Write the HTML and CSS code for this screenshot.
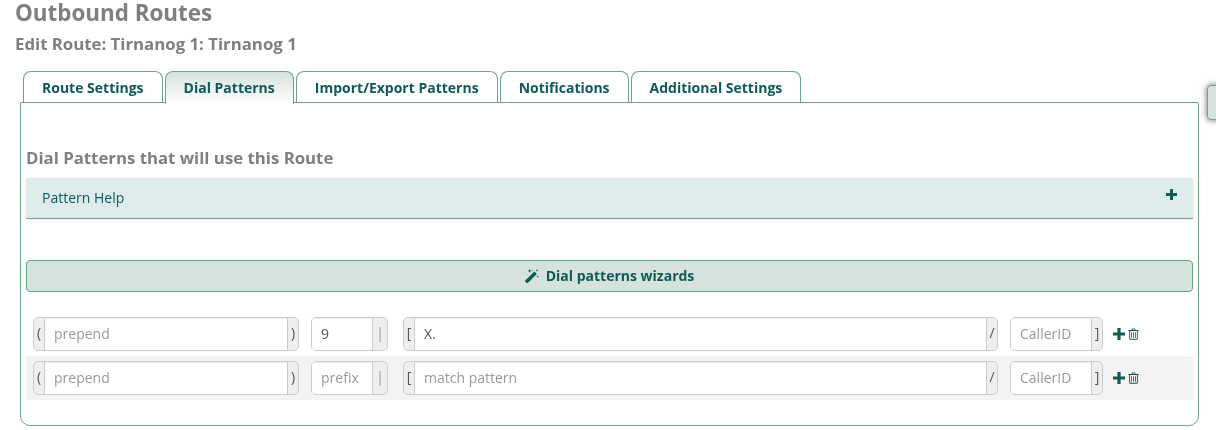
FILE: index.html
```html
<!DOCTYPE html>
<html lang="en">
<head>
    <meta charset="UTF-8">
    <meta name="viewport" content="width=device-width, initial-scale=1.0">
    <title>Outbound Routes</title>
    <link rel="stylesheet" href="styles.css">
</head>
<body>
    <h1>Outbound Routes</h1>
    <h2>Edit Route: Tirnanog 1: Tirnanog 1</h2>

    <button class="float-btn" aria-label="Actions"></button>

    <div class="tabs">
        <a class="tab">Route Settings</a>
        <a class="tab active">Dial Patterns</a>
        <a class="tab">Import/Export Patterns</a>
        <a class="tab">Notifications</a>
        <a class="tab">Additional Settings</a>
    </div>

    <div class="panel">
        <h3>Dial Patterns that will use this Route</h3>

        <div class="help-bar">
            <span class="label">Pattern Help</span>
            <svg class="icon-plus" viewBox="0 0 12 12"><path d="M4.4 0h3.2v4.4H12v3.2H7.6V12H4.4V7.6H0V4.4h4.4z"/></svg>
        </div>

        <button class="wizard-btn">
            <svg class="icon-wand" viewBox="0 0 14 14">
                <path d="M0.3 11.6 8.9 3a.8.8 0 0 1 1.1 0l1.4 1.4a.8.8 0 0 1 0 1.1L2.8 14a.8.8 0 0 1-1.1 0L.3 12.7a.8.8 0 0 1 0-1.1z"/>
                <path d="M4 1.2 5 0l.3 1.5 1.3.4-1.3.5L5 3.8 4.2 2.6 3 2.3zM12 0l.5 1 1 .4-1 .4-.5 1-.4-1-1-.4 1-.4zM12.6 6.5l.4.8.9.3-.9.4-.4.8-.3-.8-.9-.4.9-.3zM7.4.4l.3.6.6.2-.6.3-.3.6-.2-.6-.6-.3.6-.2z"/>
            </svg>
            <span class="label">Dial patterns wizards</span>
        </button>

        <div class="pattern-row">
            <div class="group"><span class="addon">(</span><input type="text" placeholder="prepend"><span class="addon">)</span></div>
            <div class="group"><input type="text" placeholder="prefix" value="9"><span class="addon pipe">|</span></div>
            <div class="group"><span class="addon">[</span><input type="text" placeholder="match pattern" value="X."><span class="addon">/</span></div>
            <div class="group"><input type="text" placeholder="CallerID"><span class="addon">]</span></div>
            <div class="row-actions">
                <svg class="icon-plus" viewBox="0 0 12 12"><path d="M4.4 0h3.2v4.4H12v3.2H7.6V12H4.4V7.6H0V4.4h4.4z"/></svg>
                <svg class="icon-trash" viewBox="0 0 11 12"><path d="M3.6 2V.9L4.3.4h2.4l.7.5V2H10.6v1H9.8v8l-.8.7H2l-.8-.7V3H.4V2zM4.5 2h2V1.2h-2zM2.1 3v7.8h6.8V3zM3.2 4.2H4v5.6h-.8zM5.1 4.2h.8v5.6h-.8zM7 4.2h.8v5.6H7z" fill-rule="evenodd"/></svg>
            </div>
        </div>

        <div class="pattern-row alt">
            <div class="group"><span class="addon">(</span><input type="text" placeholder="prepend"><span class="addon">)</span></div>
            <div class="group"><input type="text" placeholder="prefix"><span class="addon pipe">|</span></div>
            <div class="group"><span class="addon">[</span><input type="text" placeholder="match pattern"><span class="addon">/</span></div>
            <div class="group"><input type="text" placeholder="CallerID"><span class="addon">]</span></div>
            <div class="row-actions">
                <svg class="icon-plus" viewBox="0 0 12 12"><path d="M4.4 0h3.2v4.4H12v3.2H7.6V12H4.4V7.6H0V4.4h4.4z"/></svg>
                <svg class="icon-trash" viewBox="0 0 11 12"><path d="M3.6 2V.9L4.3.4h2.4l.7.5V2H10.6v1H9.8v8l-.8.7H2l-.8-.7V3H.4V2zM4.5 2h2V1.2h-2zM2.1 3v7.8h6.8V3zM3.2 4.2H4v5.6h-.8zM5.1 4.2h.8v5.6h-.8zM7 4.2h.8v5.6H7z" fill-rule="evenodd"/></svg>
            </div>
        </div>
    </div>
</body>
</html>
```

FILE: styles.css
```css
body {
    margin: 0;
    padding: 0 17px 0 20px;
    height: 430px;
    box-sizing: border-box;
    overflow: hidden;
    background: #fff;
    color: #0e5a58;
    font-family: "Open Sans", sans-serif;
    font-size: 14px;
    will-change: opacity;
}

h1 {
    margin: 0 0 0 -5px;
    color: #7f7f7f;
    font-size: 22.4px;
    font-weight: 700;
    line-height: 25px;
}

h2 {
    margin: 9px 0 0 -5px;
    color: #7f7f7f;
    font-size: 16.8px;
    font-weight: 700;
    line-height: 20px;
}

.tabs {
    display: flex;
    gap: 2px;
    margin: 17px 0 0 3px;
    position: relative;
    z-index: 1;
}

.tab {
    padding: 0 18px;
    height: 31px;
    line-height: 32px;
    border: 1px solid #6ba588;
    border-bottom: none;
    border-radius: 8px 8px 0 0;
    font-weight: 700;
    font-size: 14px;
    will-change: opacity;
}

.tab.active {
    background: linear-gradient(#d6e3dd, #fff);
    height: 32px;
    margin-bottom: -1px;
}

.panel {
    width: 1179px;
    height: 324px;
    box-sizing: border-box;
    margin-top: -1px;
    padding: 0 5px;
    border: 1px solid #6ba588;
    border-radius: 0 0 10px 10px;
    border-top-right-radius: 2px;
}

h3 {
    margin: 44px 0 0;
    color: #7f7f7f;
    font-size: 16.8px;
    font-weight: 700;
    line-height: 22px;
}

.label {
    will-change: opacity;
}

.help-bar {
    display: flex;
    justify-content: space-between;
    height: 41px;
    margin-top: 9px;
    padding: 0 16px;
    box-sizing: border-box;
    background: #ddebeb;
    border-bottom: 1px solid #6ba588;
    border-radius: 3px 3px 0 0;
    box-shadow: 0 0 2px rgba(0, 0, 0, 0.15);
    line-height: 40px;
}

.help-bar .icon-plus {
    margin-top: 11px;
}

.icon-plus {
    width: 11px;
    height: 11px;
    fill: #0e5a58;
}

.wizard-btn {
    display: flex;
    justify-content: center;
    align-items: center;
    gap: 7px;
    width: 100%;
    height: 32px;
    margin-top: 41px;
    padding-bottom: 2px;
    background: #d6e3dd;
    border: 1px solid #6ba588;
    border-radius: 4px;
    color: #0e5a58;
    font-family: inherit;
    font-size: 14px;
    font-weight: 700;
}

.icon-wand {
    width: 14px;
    height: 14px;
    fill: #0e5a58;
}

.pattern-row {
    display: grid;
    grid-template-columns: 266px 77px 598px 93px auto;
    column-gap: 12px;
    align-items: center;
    height: 44px;
    padding: 0 7px;
}

.wizard-btn + .pattern-row {
    margin-top: 20px;
}

.pattern-row.alt {
    background: #f3f3f3;
}

.pattern-row > .group:nth-child(3) {
    margin-left: 3px;
}

.group {
    display: flex;
    height: 34px;
    box-sizing: border-box;
    border: 1px solid #ccc;
    border-radius: 5px;
    overflow: hidden;
    background: #eee;
}

.group input {
    flex: 1;
    min-width: 0;
    padding: 0 9px 2px;
    border: none;
    border-radius: 0;
    background: #fff;
    box-shadow: inset 0 1px 1px rgba(0, 0, 0, 0.075);
    color: #555;
    font-family: inherit;
    font-size: 14px;
    outline: none;
}

.group input::placeholder {
    color: #999;
    opacity: 1;
}

.addon {
    flex: none;
    width: 10px;
    color: #555;
    font-size: 14px;
    line-height: 30px;
    text-align: center;
    will-change: opacity;
}

.addon.pipe {
    width: 14px;
    color: #999;
}

.addon:first-child {
    border-right: 1px solid #ccc;
}

.addon:last-child {
    border-left: 1px solid #ccc;
}

.row-actions {
    display: flex;
    align-items: center;
    gap: 3px;
    margin-left: -2px;
}

.row-actions .icon-plus {
    width: 12px;
    height: 12px;
}

.icon-trash {
    width: 11px;
    height: 12px;
    fill: #0e5a58;
}

.float-btn {
    position: absolute;
    top: 85px;
    left: 1207px;
    width: 30px;
    height: 35px;
    padding: 0;
    background: #d6e3dd;
    border: 1px solid #6ba588;
    border-radius: 4px;
    box-shadow: 0 0 6px rgba(0, 0, 0, 0.6);
}
```
